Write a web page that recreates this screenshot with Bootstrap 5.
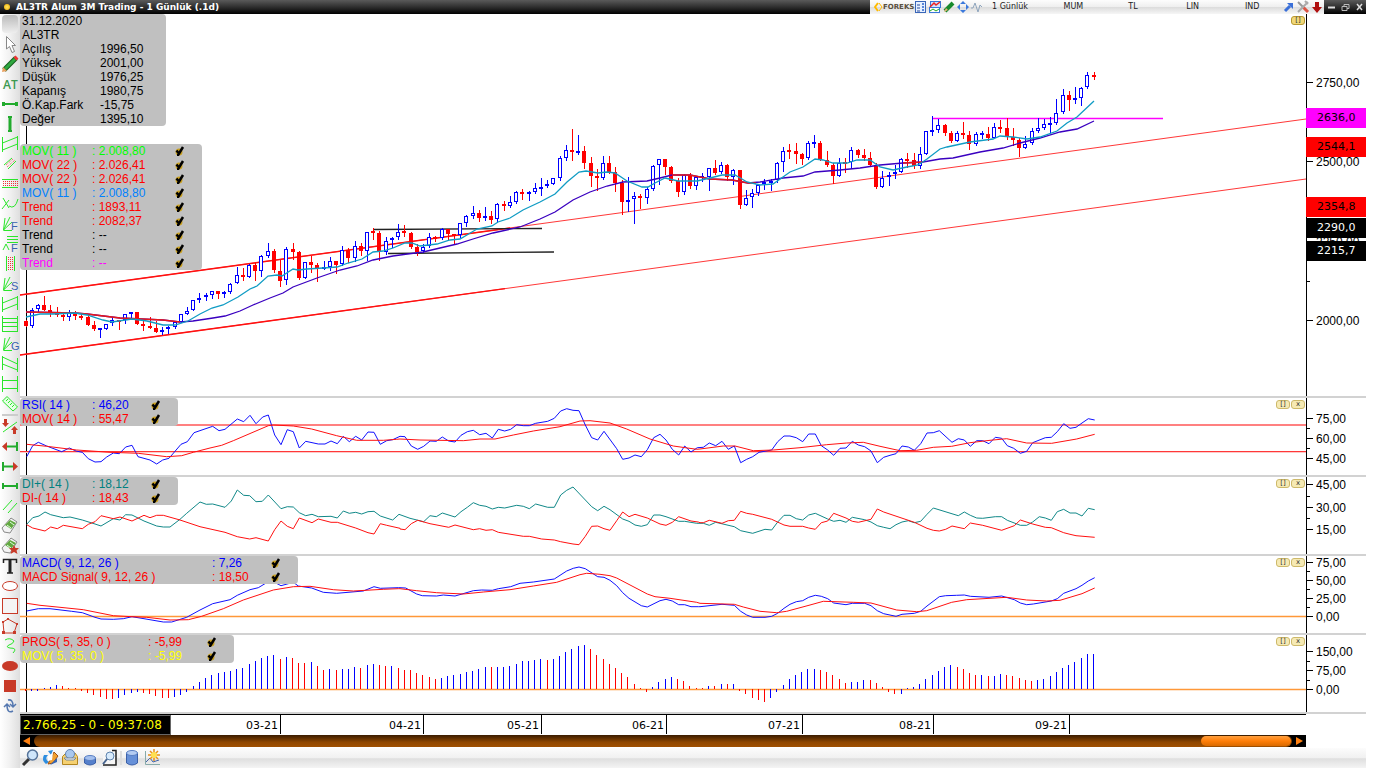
<!DOCTYPE html>
<html lang="tr">
<head>
<meta charset="utf-8">
<meta name="viewport" content="width=device-width, initial-scale=1">
<title>AL3TR Alum 3M Trading - 1 Günlük (.1d)</title>
<link href="https://cdn.jsdelivr.net/npm/bootstrap@5.3.0/dist/css/bootstrap.min.css" rel="stylesheet">
<style>
body{font-family:"Liberation Sans",Arial,sans-serif;font-size:12px;line-height:14px;color:#000;background:#fff;padding-right:14px}
button{border:0;background:none;padding:0;color:inherit;font:inherit}
svg{display:block}
.titlebar{height:14px;background:linear-gradient(#5a5a5a,#2a2a2a 55%,#000);color:#fff;font-family:"DejaVu Sans",sans-serif}
.titlebar h1{font-size:9px;font-weight:700;line-height:14px}
.dot{width:6px;height:6px;background:radial-gradient(#ffe860,#f0a800);border-radius:50%;margin:0 6px 0 4px}
.menu{width:454px;background:linear-gradient(#fdfdfd,#efefef 48%,#dcdcdc 52%,#f6f6f6);color:#222;font-size:8px;line-height:14px}
.brand{width:44px;font-size:7px;font-weight:700;color:#5a5040}
.brand svg,.tool svg{flex:none}
.tool{width:14px;height:14px}
.choice{width:60px}
.win{width:42px}
.rail{width:20px;background:linear-gradient(90deg,#fff,#f1f1f1 50%,#dedede)}
.rail button{display:block;width:20px;height:20px}
.grip{height:18px;margin:1px 2px;background:linear-gradient(#bbb,#eee);border-radius:4px}
.rail hr{margin:0 2px;height:2px;border:0;background:#ccc;opacity:1}
.pane{min-height:0}
.pane+.pane{border-top:2px solid #d2d2d2}
.sub{height:79px}
.plot svg,.scale svg{width:100%;height:100%}
.plot svg{position:absolute;inset:0}
.scale{width:60px;border-left:1px solid #000;position:relative}
.scale svg text{font-size:12px}
.tag{position:absolute;left:-1px;right:0;height:20px;line-height:20px;padding-left:11px;font-family:"DejaVu Sans",sans-serif;font-size:11px}
.legend{position:absolute;left:0;background:silver;border-radius:4px;padding-left:2px;z-index:1;white-space:nowrap}
.legend label,.legend dl>div{display:flex;height:14px;align-items:center}
.legend dl{margin:0}.legend dt,.legend dd{font-weight:400;margin:0}
.legend dt{width:78px}
.nm{width:70px}.vl{width:82px}
.w158 .vl{width:58px}
.w278 .nm{width:190px}.w278 .vl{width:58px}
.w214 .nm{width:126px}.w214 .vl{width:58px}
.w146{width:146px}.w182{width:182px}.w158{width:158px}.w278{width:278px}.w214{width:214px}
.legend input{appearance:none;width:12px;height:12px;margin:0;background:url("data:image/svg+xml,%3Csvg xmlns='http://www.w3.org/2000/svg' viewBox='0 0 12 12'%3E%3Ccircle cx='5' cy='7' r='3.5' fill='%23c9a020'/%3E%3Cpath d='M2.5 5.5L5 8.5L9 2' fill='none' stroke='%23000' stroke-width='2.5'/%3E%3Cpath d='M4 9V11' stroke='%23000' stroke-width='2'/%3E%3C/svg%3E")}
.below{top:130px}
.corner{position:absolute;right:1px;top:2px;gap:1px;z-index:1}
.corner button{width:14px;height:9px;border:1px solid #cdb96a;border-radius:3px;background:#f6eab4;color:#333;font:7px/7px "DejaVu Sans",sans-serif}
.corner.strong button{border-color:#b89830;background:#f0d878}
.times{height:23px;border-top:2px solid #d2d2d2}
.times .plot{border-top:1px solid #000}
.clock{position:absolute;left:0;top:0;width:151px;height:20px;border:1px solid #666;background:#000;color:#ff0;font-family:"DejaVu Sans",sans-serif;font-size:12px;line-height:18px;padding-left:2px;z-index:1;white-space:nowrap}
.slide{height:12px;margin:0 60px 1px 0;background:#000}
.slide button{width:14px;height:12px}
.track{background:linear-gradient(#3a1c00,#8f4700 60%,#a05000);border-radius:6px;height:12px}
.thumb{width:90px;height:10px;margin:1px;border-radius:5px;background:linear-gradient(#ffa040,#ff7e08 50%,#d96a00)}
.dock{height:20px;background:linear-gradient(#fcfcfc,#f1f1f1 48%,#dfdfdf 54%,#f4f4f4)}
.dock button{width:20px;height:20px}
.dock i{width:2px;height:14px;background:#ddd}
</style>
</head>
<body class="d-flex flex-column vh-100 overflow-hidden">
<header class="titlebar d-flex align-items-center">
  <span class="dot"></span>
  <h1 class="m-0 flex-grow-1">AL3TR Alum 3M Trading - 1 Günlük (.1d)</h1>
  <div class="menu d-flex align-items-center">
    <span class="brand d-flex align-items-center ps-1"><svg width="9" height="12" viewBox="0 0 9 12"><path d="M4 2L1 6L4 10" fill="none" stroke="#fb0" stroke-width="2"/><path d="M5 2L8 6L5 10" fill="none" stroke="#fb0" stroke-width="1"/></svg>FOREKS</span>
    <button class="tool" aria-label="Liste"><svg width="14" height="14"><rect x="1.500" y="1.500" width="10" height="11" fill="#e6f0ff" stroke="#3a66b8"/><path d="M3 5H6M3 8H6M3 11H6" stroke="#284a9a"/><path d="M8 4H10M8 7H10M8 10H10" stroke="#5a86d8" stroke-width="2"/></svg></button>
    <button class="tool" aria-label="Grafik"><svg width="14" height="14"><rect x="2.500" y="1.500" width="10" height="6" fill="#cfe2ff" stroke="#3a76d8"/><rect x="1.500" y="7.500" width="10" height="5" fill="#fff" stroke="#3a76d8"/><path d="M2 7L6 3L8 5L12 2" stroke="#e22" fill="none" stroke-width="1.500"/><path d="M2 11L5 9L8 11L11 9" stroke="#2a2" fill="none"/></svg></button>
    <button class="tool" aria-label="Kalem"><svg width="14" height="14"><path d="M3 11L11 3" stroke="#178a2c" stroke-width="4"/><path d="M2 12L4 8L6 10Z" fill="#e8b070"/></svg></button>
    <button class="tool" aria-label="Taşı"><svg width="14" height="14"><path d="M7 1L10 4H4ZM7 13L4 10H10ZM1 7L4 4V10ZM13 7L10 10V4Z" fill="#3b79dc"/></svg></button>
    <button class="tool" aria-label="Sinyal"><svg width="14" height="14"><path d="M1 8H3L5 3L8 12L10 5L12 7" fill="none" stroke="#8fa5bd"/></svg></button>
    <button class="choice text-start ps-2">1 Günlük</button><button class="choice">MUM</button><button class="choice">TL</button><button class="choice">LIN</button><button class="choice">IND</button>
    <span class="d-flex ms-auto"><button class="tool" aria-label="Ayır"><svg width="14" height="14"><path d="M3 11L8 6" stroke="#3a6fd8" stroke-width="3"/><path d="M5 3H11V9Z" fill="#3a6fd8"/></svg></button>
    <button class="tool" aria-label="Ayarlar"><svg width="14" height="14"><path d="M2 2L7 7" stroke="#999" stroke-width="2"/><path d="M7 7L12 12" stroke="#d54" stroke-width="3"/><path d="M12 2L2 12M9 1L12 4" stroke="#aaa" stroke-width="2"/></svg></button>
    <button class="tool" aria-label="Aşağı"><svg width="14" height="14"><path d="M5 2H9V7H12L7 13L2 7H5Z" fill="#b01010"/></svg></button></span>
  </div>
  <div class="win d-flex"><button class="tool" aria-label="Küçült"><svg width="14" height="14"><path d="M4 7.500H11" stroke="#ddd" stroke-width="2"/></svg></button><button class="tool" aria-label="Geri yükle"><svg width="14" height="14"><path d="M4 6.500H9V10.500H4ZM6 6V4.500H11V8.500H9" stroke="#bbb" fill="none"/></svg></button><button class="tool" aria-label="Kapat"><svg width="14" height="14"><path d="M5 4L10 10M10 4L5 10" stroke="#ddd" stroke-width="1.500"/></svg></button></div>
</header>
<div class="d-flex flex-grow-1" style="min-height:0">
  <nav class="rail flex-shrink-0" id="rail" aria-label="Çizim araçları"><div class="grip"></div></nav>
  <main class="d-flex flex-column flex-grow-1" style="min-width:0">
    <section class="pane d-flex flex-grow-1">
      <div class="plot position-relative flex-grow-1">
        <svg id="price"></svg>
        <div class="legend w146"><dl>
          <div>31.12.2020</div><div>AL3TR</div>
          <div><dt>Açılış</dt><dd>1996,50</dd></div><div><dt>Yüksek</dt><dd>2001,00</dd></div><div><dt>Düşük</dt><dd>1976,25</dd></div><div><dt>Kapanış</dt><dd>1980,75</dd></div><div><dt>Ö.Kap.Fark</dt><dd>-15,75</dd></div><div><dt>Değer</dt><dd>1395,10</dd></div>
        </dl></div>
        <div class="legend w182 below" data-rows="MOV( 11 )|2.008,80|#0f0;MOV( 22 )|2.026,41|red;MOV( 22 )|2.026,41|red;MOV( 11 )|2.008,80|#0080ff;Trend|1893,11|red;Trend|2082,37|red;Trend|--|#000;Trend|--|#000;Trend|--|#f0f"></div>
        <div class="corner strong d-flex"><button>[]</button></div>
      </div>
      <div class="scale" data-top="14" data-ticks="82|2750,00;161|2500,00;241|2250,00;281|;320|2000,00">
        <span class="tag" style="top:94px;background:#f0f">2636,0</span><span class="tag" style="top:123px;background:red">2544,1</span><span class="tag" style="top:183px;background:red">2354,8</span><span class="tag text-white" style="top:204px;background:#000">2290,0</span><span class="tag text-white" style="top:227px;background:#000">2215,7</span>
      </div>
    </section>
    <section class="pane sub d-flex flex-shrink-0">
      <div class="plot position-relative flex-grow-1"><svg id="rsi"></svg>
        <div class="legend w158" data-rows="RSI( 14 )|46,20|#00f;MOV( 14 )|55,47|red"></div>
        <div class="corner d-flex"><button>[]</button><button>x</button></div></div>
      <div class="scale" data-top="398" data-ticks="418|75,00;428|;438|60,00;448|;458|45,00"></div>
    </section>
    <section class="pane sub d-flex flex-shrink-0">
      <div class="plot position-relative flex-grow-1"><svg id="di"></svg>
        <div class="legend w158" data-rows="DI+( 14 )|18,12|#008080;DI-( 14 )|18,43|red"></div>
        <div class="corner d-flex"><button>[]</button><button>x</button></div></div>
      <div class="scale" data-top="477" data-ticks="484|45,00;496|;507|30,00;518|;529|15,00"></div>
    </section>
    <section class="pane sub d-flex flex-shrink-0">
      <div class="plot position-relative flex-grow-1"><svg id="macd"></svg>
        <div class="legend w278" data-rows="MACD( 9, 12, 26 )|7,26|#00f;MACD Signal( 9, 12, 26 )|18,50|red"></div>
        <div class="corner d-flex"><button>[]</button><button>x</button></div></div>
      <div class="scale" data-top="556" data-ticks="562|75,00;571|;580|50,00;589|;598|25,00;607|;616|0,00"></div>
    </section>
    <section class="pane sub d-flex flex-shrink-0">
      <div class="plot position-relative flex-grow-1"><svg id="pros"></svg>
        <div class="legend w214" data-rows="PROS( 5, 35, 0 )|-5,99|red;MOV( 5, 35, 0 )|-5,99|#ff0"></div>
        <div class="corner d-flex"><button>[]</button><button>x</button></div></div>
      <div class="scale" data-top="635" data-ticks="651|150,00;661|;670|75,00;680|;689|0,00"></div>
    </section>
    <div class="times d-flex flex-shrink-0"><div class="plot position-relative flex-grow-1"><svg id="dates"></svg><div class="clock">2.766,25 - 0 - 09:37:08</div></div><div style="width:60px"></div></div>
    <div class="slide d-flex flex-shrink-0">
      <button aria-label="Sola"><svg width="14" height="12"><path d="M10 2V10L3 6Z" fill="#ff8010"/></svg></button>
      <div class="track flex-grow-1 d-flex justify-content-end"><div class="thumb"></div></div>
      <button aria-label="Sağa"><svg width="14" height="12"><path d="M4 2V10L11 6Z" fill="#ff8010"/></svg></button>
    </div>
    <div class="dock d-flex align-items-center flex-shrink-0">
      <button aria-label="Büyüteç"><svg width="20" height="20"><path d="M3 17L9 11" stroke="#333" stroke-width="3"/><circle cx="12.500" cy="7" r="5" fill="#cfe6fb" stroke="#56749a" stroke-width="1.500"/></svg></button>
      <button aria-label="Renkler"><svg width="20" height="20"><path d="M8 3L13 2L11 7ZM4 7Q1 12 6 16L9 14Q4 11 8 7Z" fill="#2c8de0"/><path d="M14 4L18 8L13 15L8 16Z" fill="#f0a030" stroke="#a05010"/><path d="M10 17L17 14V10Z" fill="#3465b5"/><path d="M8 8L13 5L12 12L8 13Z" fill="#fff"/></svg></button>
      <button aria-label="Yazdır"><svg width="20" height="20"><path d="M2.500 8.500L6 5H15L17.500 8.500V16.500H2.500Z" fill="#f5d070" stroke="#b18520"/><circle cx="10" cy="6" r="4.500" fill="#a9c8ee" stroke="#6085b8"/><path d="M4 10H16L14 12H6Z" fill="#fff" stroke="#789"/></svg></button>
      <button aria-label="Veri"><svg width="20" height="20"><path d="M4.500 10V15Q10 19 15.500 15V10Z" fill="#5580cc" stroke="#3b60a8"/><ellipse cx="10" cy="10" rx="5.500" ry="2.500" fill="#a4c0ee" stroke="#5a80c4"/></svg></button>
      <button aria-label="Önizleme"><svg width="20" height="20"><path d="M3 4L5 2H15V17H3Z" fill="#f6f6f6"/><path d="M12 2.500H16V17H3" fill="none" stroke="#222" stroke-width="1.500"/><circle cx="10" cy="8" r="4" fill="#d8ebfc" stroke="#5f84ae"/><path d="M3 16L7 11" stroke="#47648e" stroke-width="2"/></svg></button>
      <i></i>
      <button aria-label="Veritabanı"><svg width="20" height="20"><path d="M4.500 5V15Q10 19 15.500 15V5Z" fill="#6690d8" stroke="#3b60a8"/><ellipse cx="10" cy="5" rx="5.500" ry="2.500" fill="#b4ccf2" stroke="#5a80c4"/></svg></button>
      <button aria-label="Yeni grafik"><svg width="20" height="20"><path d="M3.500 3V16.500H18" fill="none" stroke="#8aa"/><path d="M4 14L8 10L11 14L17 12" fill="none" stroke="#46a"/><path d="M12 1V13M6 7H18M8 3L16 11M16 3L8 11" stroke="#e89018" stroke-width="1.500"/><circle cx="12" cy="7" r="3" fill="#ffe050"/></svg></button>
    </div>
  </main>
</div>
<script src="https://cdn.jsdelivr.net/npm/bootstrap@5.3.0/dist/js/bootstrap.bundle.min.js"></script>
<script>
// ---- drawing tools: name, svg body on a 20 x 20 grid
const G='#2be52b', D='#22ab2e', R='#c83a28';
const p=(d,c,w=1,f='none')=>`<path d="${d}" fill="${f}" stroke="${c}" stroke-width="${w}"/>`;
const eraser='<path d="M2 12L11 2L17 6L10 17L4 16Z" fill="#f4f4f4" stroke="#8a8a8a"/><path d="M5 9L10 4L16 7L11 13Z" fill="#62a840"/><path d="M7 9L11 12M10 6L14 9" stroke="#dfd" stroke-width="1"/>';
const fan=l=>p('M3.500 16L5 4M3.500 16L10 3M3.500 16L12 8M3.500 16.500H12',G)+`<text x="11" y="16" font-size="11" fill="#3a62b0">${l}</text>`;
const dots=(x,y,c,r)=>{let s='';for(let i=0;i<c;i++)for(let j=0;j<r;j++)s+=`<rect x="${x+2*i}" y="${y+2*j}" width="1" height="1" fill="#e33"/>`;return s};
const tools=[
['İmleç',p('M6.500 2.500V15L9.500 12.500L12 18.500L14.500 17.500L12 11.500H15.500Z','#888',1,'#fff')],
['Kalem',p('M4 16L16 4','#145c1c',5)+p('M5 15L15 5','#2fa840',3)+p('M15 5L17 3','#e33',4)+'<path d="M2 18L3 13L7 17Z" fill="#e8a060"/>'],
['Metin AT','<text x="3" y="15" font-size="12" font-weight="600" font-family="Open Sans,sans-serif" fill="#3c9a50">AT</text>'],
['Yatay',p('M3 10H17',D,2)+p('M3.500 8V12M16.500 8V12',D,3)],
['Dikey',p('M10 3V17',D,3)+p('M8 3H12M8 17H12',D,2)],
['Kanal',p('M2.500 3V18M17.500 2V16M2.500 9L17.500 3M2.500 16L17.500 10',G)],
['Bant',p('M4 11L12 4M8 15L16 7',G)+p('M6 11L13 5M7 13L15 6','#e55',1).replace('/>',' stroke-dasharray="1 1"/>')],
['Aralık',p('M2 5.500H18M2 13.500H18',G)+dots(3,7,8,3)],
['Yay',p('M3 4L9 14M2 15L9 6M9 12Q15 16 18 5',G)],
['Fibo yelpaze',fan('F')],
['Fibo seviye',p('M7 2.500H18M7 5.500H18M7 8.500H18M3 16L6 10L9 16',G)+'<text x="11" y="18" font-size="11" fill="#3a62b0">F</text>'],
['Dikey bant',p('M6.500 2V17M14.500 2V17',G)+dots(8,3,3,7)],
['S yelpaze',fan('S')],
['Regresyon',p('M2.500 3V18M17.500 2V16M2.500 9L17.500 3M2.500 16L17.500 10',G)],
['Seviyeler',p('M2.500 2V18M17.500 2V18M2 4.500H18M2 8.500H18M2 12.500H18M2 17.500H18',G)],
['Gann',fan('G')],
['Alçalan kanal',p('M2.500 2V16M17.500 4V18M2.500 3L17.500 10M2.500 10L17.500 16',G)],
['Aralıklar',p('M2.500 2V18M17.500 2V18M2 6.500H18M2 14.500H18',G)],
['Cetvel',p('M7 2.500L17.500 13L13 17L2.500 7Z',G,1,'#e4ffe4')+p('M8 5L6 7M10 7L8 9M12 9L10 11M14 11L12 13',G)],
null,
['Ters trend',p('M3 16L17 6',G)+`<path d="M4 3H7V7H9L5.500 11L2 7H4ZM13 18H16V14H18L14.500 10L11 14H13Z" fill="${R}"/>`],
['Sol ok',p('M6 10.500H17',D,2)+p('M17 6V15',D,2)+`<path d="M2 10.500L7 6V15Z" fill="${R}"/>`],
['Sağ ok',p('M3 10.500H14',D,2)+p('M3 6V15',D,2)+`<path d="M18 10.500L13 6V15Z" fill="${R}"/>`],
['Parça',p('M3 10H17',D,2)+p('M3 7V13M17 7V13',D,2)],
['Paralel',p('M3 14L12 4M8 17L17 7',G)],
['Silgi',eraser],
['Tümünü sil',eraser+`<path d="M14 9L15.500 12L19 12L16.500 14.500L17.500 18L14 16L10.500 18L11.500 14.500L9 12L12.500 12Z" fill="${R}"/>`],
['Yazı',p('M3.500 7V3.500H16.500V7M7 17H13','#222',1.5)+p('M10 3V17','#222',3)],
['Elips',`<ellipse cx="10" cy="10" rx="7.500" ry="4.500" fill="#fff" stroke="${R}"/>`],
['Dikdörtgen',`<rect x="2.500" y="2.500" width="15" height="15" fill="#f4f4f4" stroke="${R}"/>`],
['Çokgen',p('M8 3L17 8L14 17H4L3 6Z',R)+`<path d="M7 2h2v2h-2zM16 7h2v2h-2zM13 15h3v3h-3zM2 15h3v3h-3zM2 5h2v2h-2z" fill="${R}"/>`],
['Serbest',p('M5 4Q10 1 14 5Q13 8 9 9Q5 11 10 12Q18 12 13 17',G)],
['Dolu elips',`<ellipse cx="10" cy="10" rx="8" ry="5" fill="${R}"/>`],
['Dolu kare',`<rect x="4" y="4" width="12" height="12" fill="${R}"/>`],
['Yenile',p('M8 4Q13 3 13 10M10 8L13 11L16 8M13 15Q7 18 7 9M4 11L7 8L10 11','#5578b0',1.5)]
];
document.getElementById('rail').insertAdjacentHTML('beforeend',tools.map(t=>t?`<button aria-label="${t[0]}"><svg width="20" height="20">${t[1]}</svg></button>`:'<hr>').join(''));

// ---- legends and value scales
document.querySelectorAll('[data-rows]').forEach(e=>{e.innerHTML=e.dataset.rows.split(';').map(r=>{const[n,v,c]=r.split('|');return `<label style="color:${c}"><span class="nm">${n}</span><span class="vl">: ${v}</span><input type="checkbox" checked></label>`}).join('')});
document.querySelectorAll('[data-ticks]').forEach(e=>{const top=+e.dataset.top;
 e.insertAdjacentHTML('afterbegin','<svg>'+e.dataset.ticks.split(';').map(t=>{let[y,l]=t.split('|');y=y-top;return `<path d="M0 ${y+.5}H${l?6:3}" stroke="#000"/>`+(l?`<text x="9" y="${y+5}">${l}</text>`:'')}).join('')+'</svg>')});

// ---- series; each part is [origin x, origin y, points at three units per pixel]
const path=parts=>parts.map(([ox,oy,s])=>s.trim().split(' ').map(q=>{const[x,y]=q.split(',');return (ox+x/3).toFixed(1)+','+(oy+y/3).toFixed(1)}).join(' ')).join(' ');
const line=(c,parts,w=1)=>`<polyline fill="none" stroke="${c}" stroke-width="${w}" points="${path(parts)}"/>`;
const raw=(c,s,w=1)=>`<polyline fill="none" stroke="${c}" stroke-width="${w}" points="${s}"/>`;
const level=(y,c,w=1)=>`<path d="M20 ${y}H4000" stroke="${c}" stroke-width="${w}"/>`;
const put=(id,top,body)=>{document.getElementById(id).innerHTML=`<g transform="translate(-20,${-top})"><path d="M26.500 0V2000" stroke="#000"/>${body}</g>`};

// candles: colour, high, body top, body bottom, low
const candles=`r320,321,326,326 b308,310,326,327 b304,305,309,312 r296,305,310,310 r305,310,312,316 r307,312,315,316 r313,315,317,320 b310,312,317,320 r311,313,316,319 r314,316,317,319 r316,317,325,325 r321,325,329,330 b328,328,329,337 b324,324,329,329 b317,320,323,325 r320,320,321,329 b314,314,320,323 b312,312,314,318 r312,312,324,324 r321,324,326,330 r317,326,328,328 r321,328,332,332 b327,330,332,334 b326,327,328,333 b322,322,327,328 b314,314,322,322 b307,311,314,314 b300,300,310,310 b293,298,299,302 b293,295,297,300 b291,291,295,298 r291,291,294,298 b291,292,294,297 b283,284,292,293 b267,275,283,283 r268,275,277,280 b264,265,277,277 r263,265,271,280 b255,256,271,276 b243,251,256,257 r249,251,270,272 r260,271,281,286 b247,249,280,284 r243,249,252,259 r251,252,278,279 b262,262,278,278 r256,262,265,272 r263,265,268,281 b261,267,268,269 b257,261,267,270 r261,261,265,273 b246,250,264,265
r248,250,258,262 b241,246,258,261 r243,246,251,255 b232,232,251,260 r228,231,233,239 r231,233,252,260 b237,241,252,254 b237,238,240,247 b224,232,237,239 r225,231,233,236 r232,233,247,248 r244,247,252,255 b244,247,251,252 b233,237,246,247 r236,237,238,241 b228,229,238,239 r229,229,234,239 r234,234,235,244 b223,223,235,237 b215,216,223,226 b206,213,216,218 r210,213,218,221 b207,216,217,220 r211,216,220,223 b203,204,219,222 r201,204,206,210 b196,202,206,207 b191,192,202,203 r189,192,193,199 b191,192,194,200 b183,188,192,193 b178,187,188,195 b180,184,186,187 b178,178,184,184 b156,158,178,180 b145,150,158,160 r129,150,152,160 b135,151,152,154 r146,151,163,168 r157,163,176,186 r169,176,178,190 b156,163,178,179 r156,163,172,173 r167,172,183,191 r180,183,202,214 b177,200,201,211 b192,196,199,223 r194,196,198,208 b187,189,198,203 b165,166,189,190 b159,159,165,184 r159,159,167,174
r166,167,181,182 r178,181,192,196 b174,175,192,194 r173,175,186,188 b176,177,186,189 b173,176,178,181 b168,168,177,190 r160,168,173,174 b162,165,172,173 r164,165,177,180 b169,170,177,184 r170,170,205,208 b190,198,205,205 b189,193,197,207 b184,185,193,195 b179,182,184,189 b179,181,182,190 b162,163,180,182 b147,151,162,171 r144,150,152,158 r143,151,154,163 r153,154,159,164 b141,143,158,159 b135,142,144,147 r141,143,160,160 r151,160,165,166 r163,165,176,183 b158,163,176,176 r158,162,163,172 b147,150,162,168 r149,150,155,157 r149,155,158,160 r152,158,165,166 r163,165,187,188 b171,178,187,187 b172,175,177,185 b165,172,174,178 b158,159,172,172 r153,159,160,167 r153,160,166,168 b147,154,166,168 b131,131,154,154
b116,130,131,135 b119,125,130,132 r124,125,133,135 r131,133,141,142 b131,133,141,141 r122,133,135,138 r131,135,144,149 b132,134,144,145 b131,133,134,138 r127,134,138,140 b123,127,138,138 r120,127,128,132 r118,128,137,139 r128,137,140,145 r138,140,148,156 b136,144,148,148 b128,131,143,144 b118,128,131,132 b119,124,128,129 b117,123,124,132 b99,113,123,124 b89,95,112,113 r91,95,100,110 b87,98,100,103 b87,88,98,105 b72,75,87,88 r72,75,77,79`.split(/\s+/).map((s,i)=>{
 const c=s[0]=='r'?'red':'#00f', [h,t,b,l]=s.slice(1).split(',').map(Number), x=Math.floor(26+6.21*i);
 let o=`<path d="M${x+.5} ${h}V${l+1}" stroke="${c}"/>`;
 o+=(s[0]=='r'||b-t<3)?`<rect x="${x-2}" y="${t}" width="4" height="${Math.max(2,b-t)}" fill="${c}"/>`:`<rect x="${x-1.5}" y="${t+.5}" width="3" height="${b-t-1}" fill="#fff" stroke="${c}"/>`;
 return o}).join('');

const slow='26,312 75,313 87,314 120,318 163,320 180,322 193,321 213,318 225,316 240,311 253,305 270,298 283,293 293,287 317,278 340,270 357,266 373,260 393,256 423,252 440,248 457,244 473,239 493,233 520,227 540,219 555,212 573,200 590,192 607,186 623,182 647,181 660,178 672,175 690,175 710,179 732,180 748,183 760,182 783,178 803,176 815,172 840,170 860,168 880,165 903,163 923,162 940,159 953,158 980,152 1003,148 1020,143 1040,138 1060,132 1077,129 1094,121';
const fast='26,317 40,314 53,314 75,313 87,315 103,320 112,322 132,319 147,321 163,325 175,325 188,321 200,314 212,308 223,305 238,297 250,289 257,286 268,276 277,275 282,276 293,269 298,270 307,269 323,268 337,267 348,263 362,259 373,252 383,251 393,248 405,243 412,243 420,246 437,244 450,240 460,239 477,229 492,226 498,222 510,218 523,210 540,202 555,194 567,182 579,172 586,171 598,173 607,172 615,173 627,181 642,187 648,187 655,183 665,178 678,181 697,181 710,178 722,175 735,175 747,182 760,185 773,184 790,172 803,167 815,159 823,160 833,163 847,163 857,160 870,160 880,167 893,170 907,167 918,165 927,159 940,149 947,147 970,142 993,139 1000,136 1013,137 1027,139 1040,137 1057,131 1067,123 1077,117 1094,101';
put('price',14,
 raw('#ff3838','20,295 1306,119')+raw('#ff3838','20,355 1306,179')+raw('#ff1010','20,295 510,228',1.4)+raw('#ff1010','20,355 505,288.600',1.4)+
 raw('#222','374,229.500 542,228.500',1.3)+raw('#222','388,253.500 554,252',1.3)+raw('#f0f','933,118.500 1163,118.500',1.4)+candles+
 raw('#3a00c0',slow,1.3)+raw('#e81818','26,312 75,313 87,314 120,318 163,320 180,322',1.3)+raw('#e81818','672,175 690,175 710,179 732,180 748,183 756,183',1.3)+raw('#e81818','903,163 923,162',1.3)+raw('#109cc4',fast,1.3));

put('rsi',398,level(425,'#ff8080',2)+level(451.5,'#ff3838')+level(452.5,'#ffc8c8')+
line('#1010ff',[[0,390,'80,200 98,167 115,157 140,168 185,185 208,174 228,183 247,187 265,206 285,216 303,215 320,201 340,189 358,191 377,171 396,166 414,200 450,210 470,222 488,210 507,205 543,163 562,155 582,128 638,109 657,122 675,118 712,87 731,95 750,76 768,101 788,81 805,75 824,135 843,164 862,119 880,125 898,174 917,154 955,162 975,162 993,153 1012,161 1030,139 1048,155 1067,139 1085,150 1104,126 1122,127 1141,163 1160,152 1178,149'],[400,390,'0,139 15,140 34,168 53,178 71,169 90,153 109,154 127,141 146,153 165,156 183,136 202,125 220,121 239,134 258,130 277,144 295,118 314,123 332,118 350,104 370,107 388,107 407,100 443,94 463,85 482,63 500,56 519,61 537,62 556,105 575,143 593,150 612,124 650,176 668,208 687,204 705,195 724,200 742,179 761,143 780,133 798,150 817,178 836,195 854,168 873,186 892,173'],[700,390,'10,172 28,159 47,167 66,154 85,178 103,168 122,218 140,208 158,200 177,187 215,180 233,155 252,138 270,138 289,143 308,155 326,132 346,132 364,167 383,180 401,196 420,175 438,174 457,154 475,165 494,170 513,183 532,218 551,202 570,196 588,191 606,168 625,171 643,181 662,161 681,129 700,128 718,122 756,157 775,146 793,150 811,169 830,152 848,152 867,161 886,142 905,145 922,167 941,175 961,190 980,184 998,158 1036,143 1054,142 1072,125 1091,101 1110,115 1128,112 1146,99 1165,86 1184,90']])+
line('#ff1010',[[0,390,'80,163 140,169 230,180 330,187 415,190 500,200 545,197 580,187 630,174 665,166 700,152 805,107 820,105 880,108 935,117 1010,137 1070,151 1150,151 1190,148'],[400,390,'0,147 60,150 190,152 240,147 285,147 340,135 400,123 480,110 540,93 570,92 630,99 680,117 750,147 820,168 890,178'],[700,390,'0,177 70,168 105,168 160,182 220,180 300,173 380,164 440,159 490,157 540,169 600,182 650,181 700,172 755,169 810,158 870,151 920,146 980,159 1055,160 1130,147 1184,133']]));

put('di',477,
line('#108888',[[0,390,'80,403 98,383 117,378 135,366 152,374 190,383 210,381 247,390 285,402 303,408 340,386 360,390 377,374 396,375 432,393 470,408 490,411 510,411 540,388 560,370 600,336 619,343 638,342 675,352 694,333 712,300 731,316 749,317 768,335 787,334 805,315 843,356 862,350 880,351 898,368 917,377 936,373 955,380 993,379 1012,384 1030,363 1048,370 1067,367 1085,372 1104,365 1122,364 1141,378 1178,390 1197,373'],[400,390,'0,374 30,385 71,395 90,377 109,380 127,369 165,381 183,365 202,352 220,338 239,346 258,349 277,357 295,352 314,354 350,346 370,349 388,356 407,342 443,352 463,352 482,315 500,301 519,291 575,350 593,362 612,349 630,359 668,387 687,394 705,405 724,409 742,404 761,375 780,375 798,380 836,394 854,394 890,400'],[700,390,'0,400 10,400 28,406 47,397 103,410 122,422 158,430 195,418 215,420 233,396 252,376 270,376 289,386 308,390 326,375 346,370 383,387 401,394 420,391 438,397 457,382 494,389 513,396 532,407 551,412 570,416 588,404 606,396 625,392 643,398 662,394 681,373 700,354 775,377 793,366 811,376 830,384 848,385 886,380 905,380 922,391 961,406 980,406 998,396 1018,380 1036,384 1054,391 1072,365 1091,358 1110,369 1128,369 1146,378 1165,355 1184,359']])+
line('#ff1010',[[0,390,'80,404 98,414 135,423 152,411 172,416 190,406 247,416 265,403 285,395 303,377 340,386 360,381 396,393 432,376 450,383 470,376 490,376 540,390 600,410 675,427 712,440 749,447 768,443 805,453 824,419 843,393 862,409 880,416 898,384 936,398 955,387 993,397 1012,397 1067,414 1104,428 1122,432 1141,401 1160,406 1200,415'],[400,390,'0,417 15,419 34,401 53,391 90,401 146,412 165,405 220,419 239,416 258,421 277,419 295,427 370,439 388,439 425,447 463,450 482,455 519,462 537,464 556,439 575,409 593,408 612,416 630,421 650,392 668,366 687,380 705,373 742,384 780,402 798,406 817,397 836,380 873,393 895,396'],[700,390,'0,398 10,398 28,391 66,400 85,392 103,391 122,364 140,370 158,373 215,388 252,405 270,409 308,409 326,414 346,418 364,398 383,393 401,370 438,384 457,394 475,397 513,388 532,357 551,366 643,397 681,415 700,421 718,423 737,418 756,408 793,416 811,399 848,406 905,421 943,407 961,390 998,402 1036,412 1054,413 1091,428 1110,433 1128,437 1184,442']]));

put('macd',556,level(616.5,'#ff9838',1.3)+
line('#1010ff',[[0,550,'80,183 115,176 150,176 215,184 247,188 285,202 303,207 340,208 370,206 396,200 432,206 490,216 515,216 560,202 600,180 638,161 690,149 712,136 750,119 775,113 805,95 820,95 843,107 880,97 895,108 935,114 970,127 1010,130 1090,123 1122,110 1141,115 1195,113'],[400,390,'0,593 17,594 50,612 67,617 110,618 130,615 165,618 183,613 220,602 245,600 277,601 295,596 332,590 360,580 400,576 463,567 500,543 520,535 537,531 556,536 593,560 612,562 630,571 650,587 668,608 687,625 724,647 742,651 780,632 798,628 817,633 836,644 854,644 873,650 895,650'],[700,390,'0,650 66,643 103,646 122,664 140,675 158,682 195,682 215,679 233,670 252,655 270,643 289,635 308,632 326,622 346,616 364,619 383,626 401,639 438,644 457,640 494,640 513,647 532,662 551,671 588,679 606,673 643,670 662,664 681,648 718,620 737,617 770,616 793,615 811,619 867,622 905,618 943,629 961,639 980,644 1000,642 1054,633 1072,626 1091,610 1128,596 1146,586 1165,573 1184,563']])+
line('#ff1010',[[0,550,'80,160 120,166 180,172 250,179 340,197 396,200 440,202 510,210 565,209 605,199 670,176 730,150 820,120 880,110 930,109 1000,119 1060,123 1150,118 1195,116'],[400,390,'0,596 50,602 110,608 190,612 250,606 330,599 400,588 470,577 540,554 560,550 600,553 630,557 650,564 742,612 765,620 810,625 890,637'],[700,390,'0,640 103,643 130,651 180,664 230,668 260,664 330,645 370,634 460,637 513,639 590,660 650,665 680,662 755,637 800,629 920,622 980,630 1040,633 1080,631 1110,622 1146,611 1184,594']]));

const bars='r-1 b-1 b-1 b1 b2 b4 r3 r1 r1 r-1 r-3 r-5 r-7 r-9 r-9 b-8 b-5 b-3 b-2 r-3 r-4 r-6 r-8 r-8 b-7 b-5 b-2 b3 b7 b11 b14 b16 b17 b18 b20 b21 b25 b28 b31 b33 b34 r30 b32 r31 r26 r26 b27 r23 r19 b20 r19 b20 b20 b22 r21 b24 b25 r24 r23 b23 r21 r19 r19 r16 r14 r12 r10 b11 b13 b14 b15 b17 b18 b20 b22 r22 b22 b22 b23 b25 b28 b28 b29 b30 r29 b30 b33 b37 b40 b43 b44 r40 r34 r30 r25 r21 r16 r12 r5 r1 r-2 b2 b7 b10 b12 r10 r8 r3 r1 r1 b3 r3 b5 r5 b5 r-1 r-4 r-8 r-10 r-12 b-8 b-2 b4 b10 b14 b17 b20 b20 r19 r17 r14 r10 r6 b7 b7 b9 r9 r6 r2 r-2 r-4 b-4 b1 b2 b5 b10 b14 b18 b22 b24 r22 r20 r16 r14 b14 r13 b13 b15 r14 r13 r11 r9 r8 b9 b10 b13 b17 b21 b24 b27 b31 b35 b35';
put('pros',635,level(689.5,'#ff9838',1.3)+bars.split(' ').map((s,i)=>{const v=+s.slice(1),x=Math.floor(25.500+6.21*i)+.5;return `<path d="M${x} 689V${689-v+(v<0?1:0)}" stroke="${s[0]=='r'?'red':'#00f'}"/>`}).join(''));

document.getElementById('dates').innerHTML=[['03-21',280],['04-21',423],['05-21',541],['06-21',666],['07-21',802],['08-21',933],['09-21',1069]].map(([t,x])=>`<path d="M${x-19.5} 0V19" stroke="#000"/><text x="${x-22}" y="14" text-anchor="end" font-size="11" font-family="DejaVu Sans,sans-serif">${t}</text>`).join('');
</script>
</body>
</html>
